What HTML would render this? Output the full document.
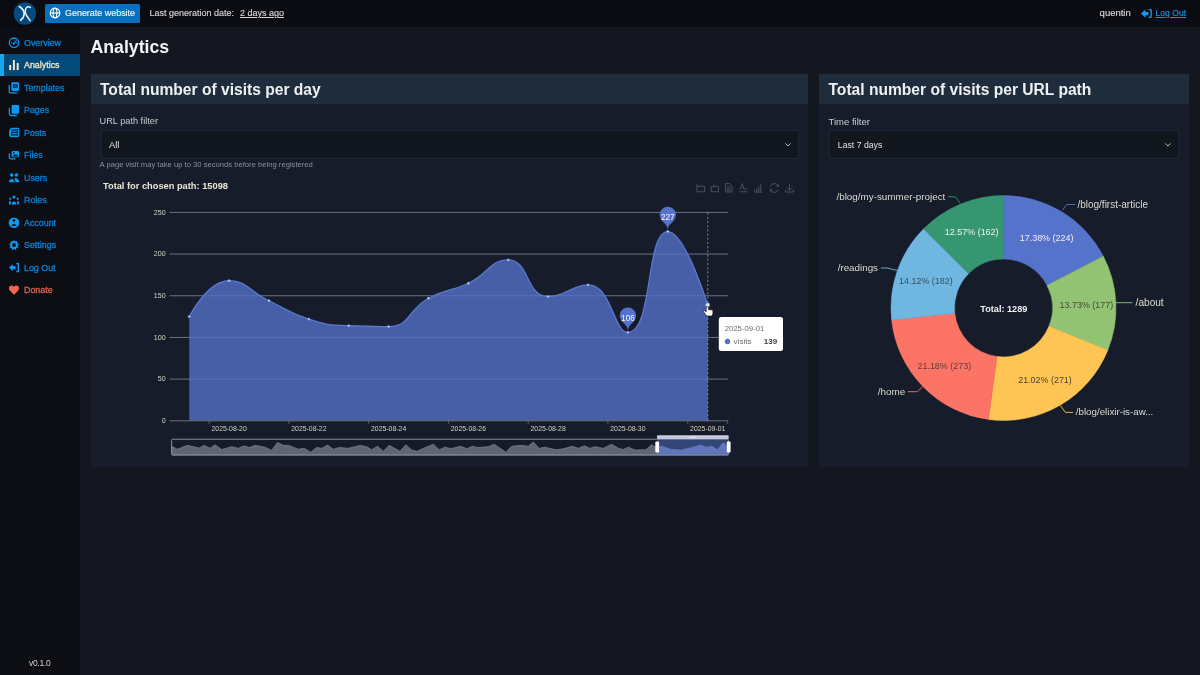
<!DOCTYPE html>
<html><head><meta charset="utf-8">
<style>
*{margin:0;padding:0;box-sizing:border-box}
html,body{width:1200px;height:675px;overflow:hidden;background:#141720;font-family:"Liberation Sans",sans-serif}
.abs{position:absolute}
.t{position:absolute;white-space:nowrap;line-height:1}
#hdr{left:0;top:0;width:1200px;height:27px;background:#0b0c12}
#side{left:0;top:27px;width:80px;height:648px;background:#0c0e14}
.nav{position:absolute;left:0;width:80px;height:22px;color:#0a80d2;font-size:8.9px;line-height:22px;-webkit-text-stroke:0.3px currentColor}
.nav span{position:absolute;left:24px;top:0}
.nav svg{position:absolute;left:0;top:0}
.nav.act{background:#03497a;color:#ece6cc}
.nav.act:before{content:"";position:absolute;left:0;top:0;width:4px;height:22px;background:#17a7ee}
.card{position:absolute;top:74px;height:393px;background:#161c2a}
.ch{position:absolute;left:0;top:0;right:0;height:30px;background:#1f2c3b}
.sel{position:absolute;height:28.6px;background:#12171f;border:1px solid #1e2533}
</style></head><body><div id="wrap" style="position:absolute;left:0;top:0;width:1200px;height:675px;will-change:transform">
<div id="hdr" class="abs">
  <svg class="abs" style="left:0;top:0" width="45" height="27" viewBox="0 0 45 27">
    <circle cx="24.9" cy="13.5" r="11.2" fill="#064a80"/>
    <path d="M19.4 6.5 C22.5 8.5 24.3 11 24.2 14 C24.1 16.6 22.6 18.6 20.8 20.2" stroke="#eef2f6" stroke-width="1.7" fill="none" stroke-linecap="round"/>
    <path d="M30.4 7.5 C29 6.2 26.6 6.4 25.6 9 C24.9 11.2 25.1 13 26.2 15 L30.1 20.6" stroke="#eef2f6" stroke-width="1.5" fill="none" stroke-linecap="round"/>
  </svg>
  <div class="abs" style="left:45px;top:4px;width:95px;height:18.7px;background:#0570be;border-radius:1.5px"></div>
  <svg class="abs" style="left:49px;top:7.4px" width="12" height="12" viewBox="0 0 12 12">
    <circle cx="6" cy="6" r="4.75" stroke="#fff" stroke-width="1.3" fill="none"/>
    <ellipse cx="6" cy="6" rx="1.9" ry="4.75" stroke="#fff" stroke-width="1.1" fill="none"/>
    <path d="M1.2 6 H10.8" stroke="#fff" stroke-width="1.1" fill="none"/>
  </svg>
  <div class="t" style="left:65px;top:8.9px;color:#eef3f8;font-size:8.95px;-webkit-text-stroke:0.15px #eef3f8">Generate website</div>
  <div class="t" style="left:149.5px;top:9.2px;color:#d5d5d5;font-size:9px;-webkit-text-stroke:0.15px #d5d5d5">Last generation date:</div>
  <div class="t" style="left:240px;top:9.2px;color:#d5d5d5;font-size:9px;text-decoration:underline;text-decoration-thickness:0.6px;text-underline-offset:0.6px;-webkit-text-stroke:0.15px #d5d5d5">2 days ago</div>
  <div class="t" style="left:1099.6px;top:8.3px;color:#d9d9d9;font-size:9.5px;-webkit-text-stroke:0.15px #d9d9d9">quentin</div>
  <svg class="abs" style="left:1141px;top:9px" width="11" height="10" viewBox="0 0 11 10">
    <path d="M0 4.6 L4.4 0.4 V2.9 H7.4 V6.3 H4.4 V8.8 Z" fill="#1a98f0"/>
    <path d="M7.6 0.6 H9.4 Q10.2 0.6 10.2 1.4 V7.6 Q10.2 8.4 9.4 8.4 H7.6" stroke="#1a98f0" stroke-width="1.3" fill="none"/>
  </svg>
  <div class="t" style="left:1155.6px;top:8.8px;color:#1a90e6;font-size:8.55px;text-decoration:underline;text-decoration-thickness:0.6px;text-underline-offset:0.6px;-webkit-text-stroke:0.15px #1a90e6">Log Out</div>
</div>

<div id="side" class="abs"></div>
<div class="nav" style="top:32px"><svg width="24" height="22" viewBox="0 0 24 22"><circle cx="14" cy="10.7" r="4.7" stroke="#0b98f2" stroke-width="1.3" fill="none"/><path d="M13.6 11.6 L16.3 8.6" stroke="#0b98f2" stroke-width="1.1" stroke-linecap="round"/><circle cx="13.6" cy="11.6" r="1.1" fill="#0b98f2"/><circle cx="11.5" cy="10.6" r="0.55" fill="#0b98f2"/><circle cx="16.6" cy="10.9" r="0.55" fill="#0b98f2"/><circle cx="14" cy="8" r="0.5" fill="#0b98f2"/></svg><span>Overview</span></div>
<div class="nav act" style="top:54px"><svg width="24" height="22" viewBox="0 0 24 22"><rect x="9.2" y="11" width="2" height="5.1" fill="#f3e9cb"/><rect x="12.9" y="6" width="2" height="10.1" fill="#f3e9cb"/><rect x="16.7" y="9" width="2" height="7.1" fill="#f3e9cb"/></svg><span>Analytics</span></div>
<div class="nav" style="top:77px"><svg width="24" height="22" viewBox="0 0 24 22"><path d="M9.2 8 V14.2 Q9.2 15.8 10.8 15.8 H17.2" stroke="#0b98f2" stroke-width="1.3" fill="none"/><rect x="11.3" y="5.2" width="7.8" height="8.7" rx="1.3" fill="#0b98f2"/><rect x="12.9" y="7.3" width="4.6" height="3.4" fill="#0c0e14"/><rect x="13.7" y="8.5" width="3" height="1" fill="#0b98f2"/></svg><span>Templates</span></div>
<div class="nav" style="top:99px"><svg width="24" height="22" viewBox="0 0 24 22"><path d="M9.4 9 V14.8 Q9.4 16.5 11 16.5 H16.8" stroke="#0b98f2" stroke-width="1.3" fill="none"/><rect x="11.6" y="5.9" width="7.4" height="8.9" rx="1" fill="#0b98f2"/></svg><span>Pages</span></div>
<div class="nav" style="top:122px"><svg width="24" height="22" viewBox="0 0 24 22"><rect x="10.6" y="6.3" width="8" height="8.3" rx="1" stroke="#0b98f2" stroke-width="1.15" fill="none"/><path d="M10.6 8.2 H9.6 V13.7 Q9.6 14.6 10.6 14.6" stroke="#0b98f2" stroke-width="1" fill="none"/><rect x="12" y="7.8" width="2.5" height="2.1" stroke="#0b98f2" stroke-width="0.8" fill="none"/><path d="M15.3 8.1 H17.3 M15.3 9.7 H17.3 M12 11.5 H17.3 M12 13.1 H17.3" stroke="#0b98f2" stroke-width="0.85"/></svg><span>Posts</span></div>
<div class="nav" style="top:144px"><svg width="24" height="22" viewBox="0 0 24 22"><path d="M9.4 9.6 V13.6 Q9.4 14.9 10.8 14.9 H15.6" stroke="#0b98f2" stroke-width="1.3" fill="none"/><rect x="11.6" y="7" width="7.4" height="6.3" rx="1" fill="#0b98f2"/><path d="M12.6 12.4 L14.8 10 L16 11.2 L17 10.2 L18.2 12.4 Z" fill="#0c0e14"/><circle cx="13.6" cy="8.7" r="0.8" fill="#0c0e14"/></svg><span>Files</span></div>
<div class="nav" style="top:167px"><svg width="24" height="22" viewBox="0 0 24 22"><circle cx="11.7" cy="8" r="1.8" fill="#0b98f2"/><circle cx="16.4" cy="8" r="1.8" fill="#0b98f2"/><path d="M9 15.2 C9 11 14.4 11 14.4 15.2 Z" fill="#0b98f2"/><path d="M14.2 11.2 C16 10.6 19.1 11.6 19.1 15.2 H15.3 C15.3 13.5 15 12 14.2 11.2 Z" fill="#0b98f2"/></svg><span>Users</span></div>
<div class="nav" style="top:189px"><svg width="24" height="22" viewBox="0 0 24 22"><circle cx="14" cy="8.1" r="1.5" fill="#0b98f2"/><circle cx="10.3" cy="9.8" r="1.1" fill="#0b98f2"/><circle cx="17.7" cy="9.8" r="1.1" fill="#0b98f2"/><path d="M11.6 15.4 C11.6 11.4 16.4 11.4 16.4 15.4 Z" fill="#0b98f2"/><rect x="9" y="12.2" width="1.9" height="3.2" fill="#0b98f2"/><rect x="17.1" y="12.2" width="1.9" height="3.2" fill="#0b98f2"/></svg><span>Roles</span></div>
<div class="nav" style="top:212px"><svg width="24" height="22" viewBox="0 0 24 22"><circle cx="14" cy="10.75" r="5.3" fill="#0b98f2"/><circle cx="14" cy="8.4" r="1.3" fill="#0c0e14"/><path d="M11.2 13.4 Q14 10.4 16.8 13.4 Q14 14.6 11.2 13.4 Z" fill="#0c0e14"/></svg><span>Account</span></div>
<div class="nav" style="top:234px"><svg width="24" height="22" viewBox="0 0 24 22"><path d="M14 5.9 L15.2 7.6 L17.2 7 L17.1 9.1 L19 10.1 L17.6 11.7 L18.5 13.6 L16.4 13.9 L15.9 16 L14 15 L12.1 16 L11.6 13.9 L9.5 13.6 L10.4 11.7 L9 10.1 L10.9 9.1 L10.8 7 L12.8 7.6 Z" fill="#0b98f2"/><circle cx="14" cy="11" r="1.9" fill="#0c0e14"/></svg><span>Settings</span></div>
<div class="nav" style="top:257px"><svg width="24" height="22" viewBox="0 0 24 22"><path d="M9 10.6 L12.6 7 V9 H15.6 V12.2 H12.6 V14.2 Z" fill="#0b98f2"/><path d="M16.2 6.6 H18.3 V14.6 H16.2" stroke="#0b98f2" stroke-width="1.4" fill="none"/></svg><span>Log Out</span></div>
<div class="nav" style="top:279px;color:#e0604a"><svg width="24" height="22" viewBox="0 0 24 22"><path d="M14 15.8 L10 11.8 C8 9.8 9.2 6.6 11.7 6.6 C12.8 6.6 13.6 7.3 14 8 C14.4 7.3 15.2 6.6 16.3 6.6 C18.8 6.6 20 9.8 18 11.8 Z" fill="#f2664f"/></svg><span>Donate</span></div>
<div class="t" style="left:28.9px;top:659.3px;color:#d0d0d0;font-size:8.5px;letter-spacing:-0.25px">v0.1.0</div>

<div class="t" style="left:90.5px;top:38.6px;color:#f3f4f6;font-size:17.7px;font-weight:bold">Analytics</div>

<div class="card" style="left:91px;width:717px">
  <div class="ch"></div>
</div>
<div class="card" style="left:819px;width:370px">
  <div class="ch"></div>
</div>
<div class="t" style="left:100px;top:81.9px;color:#eef1f4;font-size:15.6px;font-weight:bold">Total number of visits per day</div>
<div class="t" style="left:828.5px;top:81.9px;color:#eef1f4;font-size:15.6px;font-weight:bold">Total number of visits per URL path</div>
<div class="t" style="left:99.6px;top:116.5px;color:#c9ccd0;font-size:9.2px">URL path filter</div>
<div class="sel" style="left:101px;top:130px;width:698px"></div>
<div class="t" style="left:109px;top:140.5px;color:#dfe2e6;font-size:9.3px">All</div>
<svg class="abs" style="left:783.5px;top:142px" width="8" height="6"><path d="M1.3 1.4 L3.9 4 L6.5 1.4" stroke="#b8bcc2" stroke-width="1" fill="none"/></svg>
<div class="t" style="left:99.6px;top:160.5px;color:#8a9099;font-size:7.65px">A page visit may take up to 30 seconds before being registered</div>
<div class="t" style="left:103px;top:181.5px;color:#ebe7d5;font-size:9.27px;font-weight:bold">Total for chosen path: 15098</div>

<div class="t" style="left:828.5px;top:116.5px;color:#c9ccd0;font-size:9.5px">Time filter</div>
<div class="sel" style="left:829px;top:130px;width:350px"></div>
<div class="t" style="left:837.8px;top:140.5px;color:#dfe2e6;font-size:8.7px">Last 7 days</div>
<svg class="abs" style="left:1163.7px;top:142px" width="8" height="6"><path d="M1.3 1.4 L3.9 4 L6.5 1.4" stroke="#b8bcc2" stroke-width="1" fill="none"/></svg>
<svg class="abs" style="left:0;top:0" width="1200" height="675" viewBox="0 0 1200 675" font-family="Liberation Sans, sans-serif">
<line x1="169.6" y1="212.40" x2="728.3" y2="212.40" stroke="#6b717e" stroke-width="1"/>
<line x1="169.6" y1="254.08" x2="728.3" y2="254.08" stroke="#6b717e" stroke-width="1"/>
<line x1="169.6" y1="295.76" x2="728.3" y2="295.76" stroke="#6b717e" stroke-width="1"/>
<line x1="169.6" y1="337.44" x2="728.3" y2="337.44" stroke="#6b717e" stroke-width="1"/>
<line x1="169.6" y1="379.12" x2="728.3" y2="379.12" stroke="#6b717e" stroke-width="1"/>
<text x="165.6" y="212.60" fill="#d2d2c4" font-size="7.1" text-anchor="end" dominant-baseline="central">250</text>
<text x="165.6" y="254.28" fill="#d2d2c4" font-size="7.1" text-anchor="end" dominant-baseline="central">200</text>
<text x="165.6" y="295.96" fill="#d2d2c4" font-size="7.1" text-anchor="end" dominant-baseline="central">150</text>
<text x="165.6" y="337.64" fill="#d2d2c4" font-size="7.1" text-anchor="end" dominant-baseline="central">100</text>
<text x="165.6" y="379.32" fill="#d2d2c4" font-size="7.1" text-anchor="end" dominant-baseline="central">50</text>
<text x="165.6" y="421.00" fill="#d2d2c4" font-size="7.1" text-anchor="end" dominant-baseline="central">0</text>
<path d="M189.24 316.60 C189.24 316.60 207.35 280.76 229.12 280.76 C247.23 280.76 248.90 291.10 269.00 300.76 C288.78 310.27 288.12 312.59 308.88 319.10 C328.00 325.10 328.68 324.92 348.76 325.77 C368.56 326.60 370.73 326.60 388.64 326.60 C410.61 326.60 407.20 309.85 428.52 298.26 C447.08 288.17 449.27 292.45 468.40 283.26 C489.15 273.28 489.92 259.92 508.28 259.92 C529.80 259.92 525.59 296.59 548.16 296.59 C565.47 296.59 572.04 284.92 588.04 284.92 C611.92 284.92 613.41 332.44 627.92 332.44 C653.29 332.44 645.27 231.57 667.80 231.57 C685.15 231.57 707.68 304.93 707.68 304.93 L707.68 420.80 L189.24 420.80 Z" fill="#5470c6" fill-opacity="0.8"/>
<path d="M189.24 316.60 C189.24 316.60 207.35 280.76 229.12 280.76 C247.23 280.76 248.90 291.10 269.00 300.76 C288.78 310.27 288.12 312.59 308.88 319.10 C328.00 325.10 328.68 324.92 348.76 325.77 C368.56 326.60 370.73 326.60 388.64 326.60 C410.61 326.60 407.20 309.85 428.52 298.26 C447.08 288.17 449.27 292.45 468.40 283.26 C489.15 273.28 489.92 259.92 508.28 259.92 C529.80 259.92 525.59 296.59 548.16 296.59 C565.47 296.59 572.04 284.92 588.04 284.92 C611.92 284.92 613.41 332.44 627.92 332.44 C653.29 332.44 645.27 231.57 667.80 231.57 C685.15 231.57 707.68 304.93 707.68 304.93" fill="none" stroke="#5b77d0" stroke-width="1.3"/>
<line x1="169.6" y1="420.80" x2="728.3" y2="420.80" stroke="#6e7079" stroke-width="1"/>
<line x1="209.18" y1="420.80" x2="209.18" y2="423.80" stroke="#6e7079" stroke-width="0.8"/>
<line x1="288.94" y1="420.80" x2="288.94" y2="423.80" stroke="#6e7079" stroke-width="0.8"/>
<line x1="368.70" y1="420.80" x2="368.70" y2="423.80" stroke="#6e7079" stroke-width="0.8"/>
<line x1="448.46" y1="420.80" x2="448.46" y2="423.80" stroke="#6e7079" stroke-width="0.8"/>
<line x1="528.22" y1="420.80" x2="528.22" y2="423.80" stroke="#6e7079" stroke-width="0.8"/>
<line x1="607.98" y1="420.80" x2="607.98" y2="423.80" stroke="#6e7079" stroke-width="0.8"/>
<line x1="687.74" y1="420.80" x2="687.74" y2="423.80" stroke="#6e7079" stroke-width="0.8"/>
<line x1="727.62" y1="420.80" x2="727.62" y2="423.80" stroke="#6e7079" stroke-width="0.8"/>
<text x="229.12" y="428.9" fill="#d2d2c4" font-size="6.9" text-anchor="middle" dominant-baseline="central">2025-08-20</text>
<text x="308.88" y="428.9" fill="#d2d2c4" font-size="6.9" text-anchor="middle" dominant-baseline="central">2025-08-22</text>
<text x="388.64" y="428.9" fill="#d2d2c4" font-size="6.9" text-anchor="middle" dominant-baseline="central">2025-08-24</text>
<text x="468.40" y="428.9" fill="#d2d2c4" font-size="6.9" text-anchor="middle" dominant-baseline="central">2025-08-26</text>
<text x="548.16" y="428.9" fill="#d2d2c4" font-size="6.9" text-anchor="middle" dominant-baseline="central">2025-08-28</text>
<text x="627.92" y="428.9" fill="#d2d2c4" font-size="6.9" text-anchor="middle" dominant-baseline="central">2025-08-30</text>
<text x="707.68" y="428.9" fill="#d2d2c4" font-size="6.9" text-anchor="middle" dominant-baseline="central">2025-09-01</text>
<line x1="707.8" y1="212.5" x2="707.8" y2="420.80" stroke="#d0d0d0" stroke-width="0.7" stroke-dasharray="2.2 2" stroke-opacity="0.8"/>
<circle cx="189.24" cy="316.60" r="1.2" fill="#c9d4f5" stroke="#5b77d0" stroke-width="0.5"/>
<circle cx="229.12" cy="280.76" r="1.2" fill="#c9d4f5" stroke="#5b77d0" stroke-width="0.5"/>
<circle cx="269.00" cy="300.76" r="1.2" fill="#c9d4f5" stroke="#5b77d0" stroke-width="0.5"/>
<circle cx="308.88" cy="319.10" r="1.2" fill="#c9d4f5" stroke="#5b77d0" stroke-width="0.5"/>
<circle cx="348.76" cy="325.77" r="1.2" fill="#c9d4f5" stroke="#5b77d0" stroke-width="0.5"/>
<circle cx="388.64" cy="326.60" r="1.2" fill="#c9d4f5" stroke="#5b77d0" stroke-width="0.5"/>
<circle cx="428.52" cy="298.26" r="1.2" fill="#c9d4f5" stroke="#5b77d0" stroke-width="0.5"/>
<circle cx="468.40" cy="283.26" r="1.2" fill="#c9d4f5" stroke="#5b77d0" stroke-width="0.5"/>
<circle cx="508.28" cy="259.92" r="1.2" fill="#c9d4f5" stroke="#5b77d0" stroke-width="0.5"/>
<circle cx="548.16" cy="296.59" r="1.2" fill="#c9d4f5" stroke="#5b77d0" stroke-width="0.5"/>
<circle cx="588.04" cy="284.92" r="1.2" fill="#c9d4f5" stroke="#5b77d0" stroke-width="0.5"/>
<circle cx="627.92" cy="332.44" r="1.2" fill="#c9d4f5" stroke="#5b77d0" stroke-width="0.5"/>
<circle cx="667.80" cy="231.57" r="1.2" fill="#c9d4f5" stroke="#5b77d0" stroke-width="0.5"/>
<circle cx="707.68" cy="304.93" r="2.1" fill="#e8ecf8" stroke="#5b77d0" stroke-width="0.7"/>
<path d="M660.48 218.22 A8.10 8.10 0 1 1 675.12 218.22 C673.04 222.61 667.80 224.50 667.80 230.17 C667.80 224.50 662.56 222.61 660.48 218.22 Z" fill="#5673cc"/>
<text x="667.80" y="217.27" fill="#f4f6fb" font-size="8.2" text-anchor="middle" dominant-baseline="central">227</text>
<path d="M620.60 319.08 A8.10 8.10 0 1 1 635.24 319.08 C633.16 323.47 627.92 325.37 627.92 331.04 C627.92 325.37 622.68 323.47 620.60 319.08 Z" fill="#5673cc"/>
<text x="627.92" y="318.14" fill="#f4f6fb" font-size="8.2" text-anchor="middle" dominant-baseline="central">106</text>
<rect x="718.8" y="317.1" width="64.2" height="34" rx="2.5" fill="#ffffff"/>
<text x="724.7" y="328.3" fill="#707070" font-size="7.75" dominant-baseline="central">2025-09-01</text>
<circle cx="727.5" cy="341.5" r="2.7" fill="#5470c6"/>
<text x="733.6" y="341.9" fill="#707070" font-size="8.1" dominant-baseline="central">visits</text>
<text x="777.2" y="341.7" fill="#464646" font-size="8.1" font-weight="bold" text-anchor="end" dominant-baseline="central">139</text>
<path d="M706.2 307.4 Q707.3 305.9 708.4 307.4 V309.4 L712.3 310.1 Q712.9 310.3 712.9 311 V313.6 L711.9 316 H706.8 L703.5 311.8 Q703.1 310.5 704.4 310.5 L706.2 311.9 Z" fill="#ffffff" stroke="#0a0a0a" stroke-width="0.6" stroke-linejoin="round"/>
<rect x="171.6" y="439.2" width="557" height="15.8" fill="#151b28"/>
<path d="M172 455 L172 446.7 L172.5 446.7 L177.5 449.2 L187.5 445.3 L199.2 448.0 L204.2 445.3 L210.0 448.3 L215.0 444.7 L221.7 449.5 L231.7 446.7 L238.3 448.3 L244.2 445.8 L249.2 447.5 L255.0 445.3 L265.0 447.2 L271.7 450.3 L277.5 442.5 L283.3 445.3 L288.3 445.3 L298.3 449.2 L304.2 448.3 L310.8 452.2 L316.7 447.5 L321.7 448.3 L327.5 445.0 L333.3 449.2 L339.2 447.5 L348.3 448.3 L360.0 445.5 L366.7 446.7 L371.7 449.7 L377.5 446.3 L383.3 451.3 L389.2 445.3 L400.0 451.3 L405.8 444.7 L411.7 450.0 L416.7 451.3 L433.3 444.2 L439.2 449.7 L445.0 447.2 L450.8 448.7 L460.8 446.3 L466.7 448.7 L472.5 446.3 L477.5 447.5 L488.3 446.7 L494.2 444.2 L505.8 452.2 L511.7 446.2 L521.7 445.3 L528.3 446.2 L533.3 442.0 L539.2 448.3 L545.0 447.2 L556.0 449.8 L563.3 448.8 L572.5 446.2 L578.3 448.3 L584.2 445.8 L590.0 448.3 L595.0 446.7 L603.3 448.3 L611.7 444.2 L618.3 448.3 L623.3 449.5 L628.3 447.2 L635.0 450.0 L645.8 449.7 L651.7 444.7 L656.0 447.5 L661.7 446.2 L671.7 449.5 L681.7 450.0 L691.7 447.5 L700.8 445.0 L706.7 447.2 L711.7 446.2 L717.5 449.7 L723.3 442.5 L727.0 446.7 L728 455 Z" fill="#5f6571" stroke="#7d838e" stroke-width="0.7"/>
<clipPath id="selc"><rect x="657" y="439.2" width="71.5" height="15.8"/></clipPath>
<rect x="657" y="439.2" width="71.5" height="15.8" fill="#5470c6" fill-opacity="0.5"/>
<path d="M172 455 L172 446.7 L172.5 446.7 L177.5 449.2 L187.5 445.3 L199.2 448.0 L204.2 445.3 L210.0 448.3 L215.0 444.7 L221.7 449.5 L231.7 446.7 L238.3 448.3 L244.2 445.8 L249.2 447.5 L255.0 445.3 L265.0 447.2 L271.7 450.3 L277.5 442.5 L283.3 445.3 L288.3 445.3 L298.3 449.2 L304.2 448.3 L310.8 452.2 L316.7 447.5 L321.7 448.3 L327.5 445.0 L333.3 449.2 L339.2 447.5 L348.3 448.3 L360.0 445.5 L366.7 446.7 L371.7 449.7 L377.5 446.3 L383.3 451.3 L389.2 445.3 L400.0 451.3 L405.8 444.7 L411.7 450.0 L416.7 451.3 L433.3 444.2 L439.2 449.7 L445.0 447.2 L450.8 448.7 L460.8 446.3 L466.7 448.7 L472.5 446.3 L477.5 447.5 L488.3 446.7 L494.2 444.2 L505.8 452.2 L511.7 446.2 L521.7 445.3 L528.3 446.2 L533.3 442.0 L539.2 448.3 L545.0 447.2 L556.0 449.8 L563.3 448.8 L572.5 446.2 L578.3 448.3 L584.2 445.8 L590.0 448.3 L595.0 446.7 L603.3 448.3 L611.7 444.2 L618.3 448.3 L623.3 449.5 L628.3 447.2 L635.0 450.0 L645.8 449.7 L651.7 444.7 L656.0 447.5 L661.7 446.2 L671.7 449.5 L681.7 450.0 L691.7 447.5 L700.8 445.0 L706.7 447.2 L711.7 446.2 L717.5 449.7 L723.3 442.5 L727.0 446.7 L728 455 Z" fill="#6078c0" fill-opacity="0.85" clip-path="url(#selc)"/>
<line x1="657" y1="454.4" x2="728.5" y2="454.4" stroke="#5470c6" stroke-width="1.2"/>
<rect x="171.6" y="439.2" width="557" height="15.8" rx="1.2" fill="none" stroke="#8c929c" stroke-width="1"/>
<rect x="657" y="435.2" width="71.7" height="3.8" rx="1" fill="#c3cadd"/>
<rect x="689.5" y="436.5" width="7" height="1.2" fill="#ffffff" fill-opacity="0.45"/>
<rect x="655.3" y="441.6" width="3.8" height="11" rx="1" fill="#ffffff"/>
<rect x="726.8" y="441.6" width="3.8" height="11" rx="1" fill="#ffffff"/>
<g stroke="#5c616c" stroke-width="0.75" fill="none" stroke-linejoin="round">
<path d="M697 183.8 V191.8 H704.6 V186.2 H697"/>
<path d="M711.2 186.3 V191.8 H718.6 V186.3 H713.2 M714.2 184.6 L712.6 186.3 L714.2 188"/>
<path d="M725.6 183.6 H729.8 L732 185.8 V192 H725.6 Z M727 187 H730.6 M727 188.8 H730.6 M727 190.6 H730.6"/>
<path d="M739.5 189 H740.8 L742.3 183.6 L744.2 189.6 L745.4 188.4 L747.3 189 M739.5 191.8 H747.5"/>
<path d="M754.8 192 V189.4 M756.8 192 V188.2 M758.8 192 V186.2 M760.8 192 V184.2 M754.4 192.2 H762"/>
<path d="M770.2 186.6 A4.4 4.4 0 0 1 778.4 186.2 M778.6 189.4 A4.4 4.4 0 0 1 770.4 189.8 M778.6 184.4 V186.4 H776.6 M770.2 191.6 V189.6 H772.2"/>
<path d="M789.5 183.4 V190 M786.8 187.4 L789.5 190.2 L792.2 187.4 M785.6 189.6 V192 H793.4 V189.6"/>
</g>
<path d="M1003.50 195.50 A112.50 112.50 0 0 1 1103.34 256.16 L1046.99 285.42 A49.00 49.00 0 0 0 1003.50 259.00 Z" fill="#5673cc" stroke="#5673cc" stroke-width="0.5" stroke-linejoin="round"/>
<path d="M1103.34 256.16 A112.50 112.50 0 0 1 1107.81 350.13 L1048.93 326.35 A49.00 49.00 0 0 0 1046.99 285.42 Z" fill="#92c373" stroke="#92c373" stroke-width="0.5" stroke-linejoin="round"/>
<path d="M1107.81 350.13 A112.50 112.50 0 0 1 988.46 419.49 L996.95 356.56 A49.00 49.00 0 0 0 1048.93 326.35 Z" fill="#fec454" stroke="#fec454" stroke-width="0.5" stroke-linejoin="round"/>
<path d="M988.46 419.49 A112.50 112.50 0 0 1 891.63 319.90 L954.78 313.19 A49.00 49.00 0 0 0 996.95 356.56 Z" fill="#fc7466" stroke="#fc7466" stroke-width="0.5" stroke-linejoin="round"/>
<path d="M891.63 319.90 A112.50 112.50 0 0 1 923.61 228.79 L968.70 273.50 A49.00 49.00 0 0 0 954.78 313.19 Z" fill="#6fb7e0" stroke="#6fb7e0" stroke-width="0.5" stroke-linejoin="round"/>
<path d="M923.61 228.79 A112.50 112.50 0 0 1 1003.50 195.50 L1003.50 259.00 A49.00 49.00 0 0 0 968.70 273.50 Z" fill="#379672" stroke="#379672" stroke-width="0.5" stroke-linejoin="round"/>
<text x="1046.6" y="238.1" fill="#eef0f6" font-size="8.95" text-anchor="middle" dominant-baseline="central">17.38% (224)</text>
<text x="1086.4" y="304.9" fill="#3f4a38" font-size="8.95" text-anchor="middle" dominant-baseline="central">13.73% (177)</text>
<text x="1045.0" y="379.9" fill="#4c4430" font-size="8.95" text-anchor="middle" dominant-baseline="central">21.02% (271)</text>
<text x="944.3" y="366.2" fill="#623a36" font-size="8.95" text-anchor="middle" dominant-baseline="central">21.18% (273)</text>
<text x="925.9" y="280.9" fill="#38505c" font-size="8.95" text-anchor="middle" dominant-baseline="central">14.12% (182)</text>
<text x="971.7" y="232.4" fill="#eef5f0" font-size="8.95" text-anchor="middle" dominant-baseline="central">12.57% (162)</text>
<text x="1003.8" y="308.6" fill="#f2f2f2" font-size="9.15" font-weight="bold" text-anchor="middle" dominant-baseline="central">Total: 1289</text>
<text x="1077.4" y="204.3" fill="#dcdcd2" font-size="10.00" text-anchor="start" dominant-baseline="central">/blog/first-article</text>
<text x="1135.6" y="302.2" fill="#dcdcd2" font-size="10.10" text-anchor="start" dominant-baseline="central">/about</text>
<text x="1075.8" y="411.9" fill="#dcdcd2" font-size="9.75" text-anchor="start" dominant-baseline="central">/blog/elixir-is-aw...</text>
<text x="905.2" y="391.2" fill="#dcdcd2" font-size="9.90" text-anchor="end" dominant-baseline="central">/home</text>
<text x="878.0" y="267.5" fill="#dcdcd2" font-size="9.80" text-anchor="end" dominant-baseline="central">/readings</text>
<text x="945.3" y="196.3" fill="#dcdcd2" font-size="9.85" text-anchor="end" dominant-baseline="central">/blog/my-summer-project</text>
<path d="M1062.4 210.2 L1066.8 204.5 L1075 204.5" fill="none" stroke="#5673cc" stroke-width="0.9"/>
<path d="M1116 302.7 L1132.3 302.7" fill="none" stroke="#92c373" stroke-width="0.9"/>
<path d="M1060.3 405.4 L1065.4 412.4 L1073.2 412.4" fill="none" stroke="#fec454" stroke-width="0.9"/>
<path d="M922.8 386.6 L917.4 391.7 L907.8 391.7" fill="none" stroke="#fc7466" stroke-width="0.9"/>
<path d="M897 270.4 L887 268 L880.8 268" fill="none" stroke="#6fb7e0" stroke-width="0.9"/>
<path d="M960.3 203.6 L955.4 196.8 L948 196.8" fill="none" stroke="#379672" stroke-width="0.9"/>
</svg>
</div></body></html>
